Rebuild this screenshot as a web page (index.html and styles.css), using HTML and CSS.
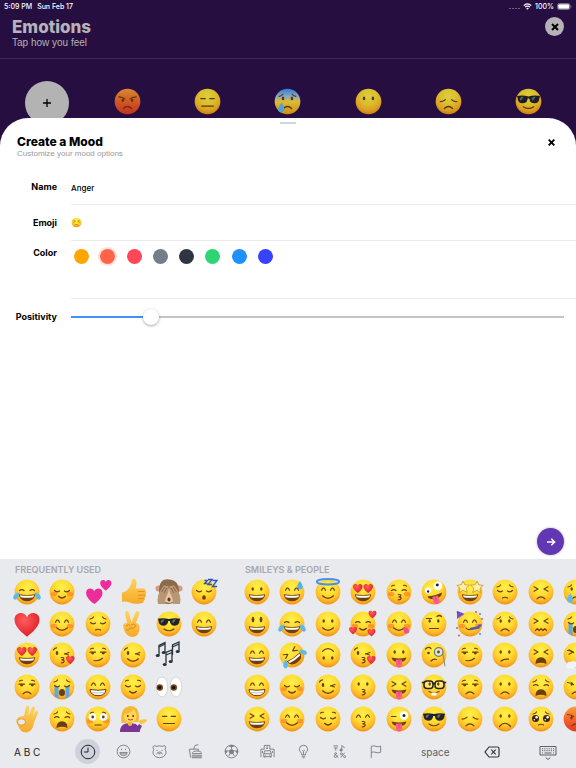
FILE: index.html
```
<!DOCTYPE html>
<html lang="en">
<head>
  <meta charset="UTF-8" />
  <meta name="viewport" content="width=device-width, initial-scale=1.0"/>
  <title>Emotions</title>
  <link rel="stylesheet" href="styles.css">
</head>
<body>

<!-- Gradients shared by all emoji -->
<svg class="defs" width="0" height="0" aria-hidden="true">
  <defs>
    <radialGradient id="g-yellow" cx="50%" cy="30%" r="72%">
      <stop offset="0" stop-color="#fff04a"/>
      <stop offset=".45" stop-color="#ffdc33"/>
      <stop offset=".75" stop-color="#ffba27"/>
      <stop offset="1" stop-color="#ee8c12"/>
    </radialGradient>
    <linearGradient id="g-red" x1="0" y1="0" x2="0" y2="1">
      <stop offset="0" stop-color="#fba03a"/>
      <stop offset=".5" stop-color="#f5652c"/>
      <stop offset="1" stop-color="#e23a22"/>
    </linearGradient>
    <linearGradient id="g-cold" x1="0" y1="0" x2="0" y2="1">
      <stop offset="0" stop-color="#3f8cf0"/>
      <stop offset=".3" stop-color="#9cc3e8"/>
      <stop offset=".5" stop-color="#fedb3b"/>
      <stop offset="1" stop-color="#f3a01c"/>
    </linearGradient>
    <radialGradient id="g-heart" cx="40%" cy="30%" r="75%">
      <stop offset="0" stop-color="#ff5d5d"/>
      <stop offset="1" stop-color="#dc1a22"/>
    </radialGradient>
    <linearGradient id="g-hand" x1="0" y1="0" x2="0" y2="1">
      <stop offset="0" stop-color="#ffd45a"/>
      <stop offset="1" stop-color="#f5a92b"/>
    </linearGradient>
  </defs>
</svg>

<div class="app">

  <div class="backdrop">
    <div class="status-bar">
      <span>5:09 PM</span>
      <span>Sun Feb 17</span>
      <span class="status-right">
        <span class="signal"><i></i><i></i><i></i><i></i></span>
        <svg width="9" height="7" viewBox="0 0 18 14"><path d="M1.5 5.2Q9-1.8 16.5 5.2M4.3 8.2q4.700-4.200 9.400 0" fill="none" stroke="#fff" stroke-width="2.400"/><path d="M9 13.500l-2.700-3q2.700-2 5.400 0z" fill="#fff"/></svg>
        <span>100%</span>
        <svg width="15" height="7" viewBox="0 0 30 14"><rect x="1" y="1" width="25" height="12" rx="3.500" fill="none" stroke="#9b90a8" stroke-width="1.500"/><rect x="2.500" y="2.500" width="22" height="9" rx="2" fill="#fff"/><path d="M27.500 5v4q1.500-.5 1.500-2t-1.500-2z" fill="#9b90a8"/></svg>
      </span>
    </div>

    <header>
      <div>
        <h1>Emotions</h1>
        <p>Tap how you feel</p>
      </div>
      <button class="close-round" aria-label="Close">
        <svg width="8" height="8" viewBox="0 0 8 8"><path d="M1 1l6 6M7 1l-6 6" stroke="#000" stroke-width="2"/></svg>
      </button>
    </header>

    <div class="moods">
      <button class="add-mood" aria-label="Add mood">
        <svg width="8" height="8" viewBox="0 0 8 8"><path d="M4 0v8M0 4h8" stroke="#000" stroke-width="1.300"/></svg>
      </button>
      <button class="mood" data-emoji="rage"></button>
      <button class="mood" data-emoji="expressionless"></button>
      <button class="mood" data-emoji="coldSweat"></button>
      <button class="mood" data-emoji="noMouth"></button>
      <button class="mood" data-emoji="disappointed"></button>
      <button class="mood" data-emoji="sunglasses"></button>
    </div>
  </div>

  <main class="sheet">
    <div class="grabber"></div>
    <div class="sheet-head">
      <div>
        <h2>Create a Mood</h2>
        <p>Customize your mood options</p>
      </div>
      <button class="close" aria-label="Close">
        <svg width="7" height="7" viewBox="0 0 7 7"><path d="M.7.7l5.600 5.600M6.300.7L.7 6.300" stroke="#000" stroke-width="1.900"/></svg>
      </button>
    </div>

    <form class="mood-form">
      <div class="row">
        <label for="name">Name</label>
        <div class="field"><input type="text" id="name" value="Anger" /></div>
      </div>
      <div class="row">
        <label for="emoji">Emoji</label>
        <div class="field"><button type="button" id="emoji" class="emoji-field" data-emoji="persevere"></button></div>
      </div>
      <div class="row row-color">
        <label for="orange">Color</label>
        <div class="field">
          <div class="colors">
            <input type="radio" name="color" id="orange" class="orange" aria-label="Orange" />
            <input type="radio" name="color" class="tomato" aria-label="Tomato" checked />
            <input type="radio" name="color" class="red" aria-label="Red" />
            <input type="radio" name="color" class="grey" aria-label="Grey" />
            <input type="radio" name="color" class="dark" aria-label="Dark" />
            <input type="radio" name="color" class="green" aria-label="Green" />
            <input type="radio" name="color" class="blue" aria-label="Blue" />
            <input type="radio" name="color" class="indigo" aria-label="Indigo" />
          </div>
        </div>
      </div>
      <div class="row">
        <label for="positivity">Positivity</label>
        <div class="field field-slider"><input type="range" id="positivity" min="0" max="100" value="15" /></div>
      </div>
    </form>

    <button class="next" aria-label="Next">
      <svg width="10" height="10" viewBox="0 0 10 10"><path d="M1 5h7.500M5.300 1.700L8.600 5 5.300 8.300" fill="none" stroke="#fff" stroke-width="1.500"/></svg>
    </button>
  </main>

  <section class="keyboard">
    <div class="groups">
      <div class="group group-recent">
        <h3>FREQUENTLY USED</h3>
        <div class="emoji-grid" id="recent"></div>
      </div>
      <div class="group group-people">
        <h3>SMILEYS &amp; PEOPLE</h3>
        <div class="emoji-grid" id="people"></div>
      </div>
    </div>

    <div class="toolbar">
      <button class="abc">A B C</button>
      <div class="tabs">
        <button class="active" aria-label="Recent"><svg viewBox="0 0 16 16"><circle cx="8" cy="8" r="6.800"/><path d="M8 3.500V8H4"/></svg></button>
        <button aria-label="Smileys"><svg viewBox="0 0 16 16"><circle cx="8" cy="8" r="6.800"/><path d="M4 9h8q-.4 3.500-4 3.500T4 9zM4.800 10.500h6.400"/><path d="M5.900 5v1.500M10.100 5v1.500"/></svg></button>
        <button aria-label="Animals"><svg viewBox="0 0 16 16"><path d="M4.500 2.600Q3 .8 1.500 2.300T2 5.600Q.6 8.500 1.200 10.500 3 14.700 8 14.700t6.800-4.200Q15.400 8.500 14 5.600q1.200-2.200 0-3.500t-2.500.5Q8 1.200 4.500 2.600z"/><path d="M5 11q.3-2.500 3-2.500t3 2.500M5.300 6.300v1.200M10.700 6.300v1.200M7.200 10h1.600L8 11z"/></svg></button>
        <button aria-label="Food"><svg viewBox="0 0 16 16"><path d="M2.800 14.500L1.500 5.500h10M6 5.500L7.500 1.500l3.500-.8M11 5.500l-.2 2"/><path d="M4.500 10.200q.2-2.700 5-2.700t5 2.700zM4 12h11M4.500 13.700h10v1h-10z"/></svg></button>
        <button aria-label="Activity"><svg viewBox="0 0 16 16"><circle cx="8" cy="8" r="6.800"/><path class="solid" d="M8 5.500l2.500 1.800-.9 3H6.400l-.9-3zM5.500 2L8 3.200 10.500 2 8 1.400zM1.500 6.500l1.500 1-.5 2-1-1zM14.500 6.500l-1.500 1 .5 2 1-1z"/><path d="M8 3v2M3 7.500l2-.3M13 7.500l-2-.3M6.100 10.700L5 12.800M9.900 10.700L11 12.800"/></svg></button>
        <button aria-label="Travel"><svg viewBox="0 0 16 16"><path d="M1 14V5.500h3.500V1.500h6v4H15V14M6.500 3.300h2M6.500 4.800h2M2.700 7.500v2M13.300 7.500v2"/><path d="M4 10.300L5 7.200h6l1 3.100v3.200H4zM4 10.300h8M4.500 13.500v1.200M11.500 13.500v1.200M5.500 12h1M9.500 12h1"/></svg></button>
        <button aria-label="Objects"><svg viewBox="0 0 16 16"><path d="M6 11.500Q6 9.700 4.500 8 3.300 6.500 3.600 5 4.300 1.300 8 1.300T12.400 5q.3 1.500-.9 3Q10 9.700 10 11.500zM6 13h4M6.800 14.700h2.400M8 11V8L6.700 6.500M8 8l1.300-1.500"/></svg></button>
        <button aria-label="Symbols"><svg viewBox="0 0 16 16"><path d="M1.500 2h5M2 4.200h4M4 4.200v3M10.500 6.500V1.500q1 1.500 3 2.500"/><circle class="solid" cx="9.700" cy="6.500" r="1.200"/><path d="M6.500 14.500L3 10.800q-.5-1.500 1-1.500 1.400.2.700 1.500l-2.200 1.400q-.8 2 1 2.200 1.800 0 2.800-2.400M13.500 9.300L9.500 14.500"/><circle cx="10" cy="10.500" r="1.100"/><circle cx="13.500" cy="13.500" r="1.100"/></svg></button>
        <button aria-label="Flags"><svg viewBox="0 0 16 16"><path d="M3.500 15V2.500q3-1.200 5 0t5-.3v6.600q-3 1.300-5 .2t-5 0"/></svg></button>
      </div>
      <button class="space">space</button>
      <button class="key" aria-label="Delete"><svg width="16" height="12" viewBox="0 0 16 12"><path d="M5 1h8.500q1.500 0 1.500 1.500v7q0 1.500-1.500 1.500H5L1 6zM7.300 3.700l4.400 4.600M11.700 3.700L7.300 8.300"/></svg></button>
      <button class="key hide-key" aria-label="Hide keyboard"><svg width="18" height="16" viewBox="0 0 18 16"><path d="M1 1.500h16v8.500H1z"/><path stroke-dasharray="1.200 1" d="M3 3.800h12.500M3 5.700h12.500"/><path d="M3 8h1M5.500 8h7M14 8h1M6.700 12.500L9 14.500l2.300-2"/></svg></button>
    </div>
  </section>

</div>

<script src="emoji.js"></script>
</body>
</html>
```
FILE: styles.css
```
* {
  box-sizing: border-box;
}

body {
  margin: 0;
  font-family: Inter, "Liberation Sans", sans-serif;
  background-color: #260f40;
}

h1, h2, h3, p {
  margin: 0;
}

button {
  border: none;
  padding: 0;
  background: none;
  font-family: inherit;
  cursor: pointer;
}

svg {
  display: block;
}

.defs {
  position: absolute;
}

.app {
  display: flex;
  flex-direction: column;
  min-height: 100vh;
  overflow: hidden;
}

/* Dimmed screen behind the sheet */
.backdrop {
  background-color: #260f40;
}

.status-bar {
  display: flex;
  align-items: center;
  gap: 5px;
  height: 12px;
  padding: 0 4px;
  color: #fff;
  font-size: 7px;
  font-weight: 500;
}

.status-right {
  display: flex;
  align-items: center;
  gap: 3px;
  margin-left: auto;
}

.signal {
  display: flex;
  gap: 1px;
  padding-top: 4px;
}

.signal i {
  width: 2px;
  height: 1px;
  background-color: #6f6080;
}

header {
  display: flex;
  justify-content: space-between;
  align-items: flex-start;
  height: 47px;
  padding: 5px 12px 0;
  border-bottom: 1px solid #3b2553;
  color: #b5b2b8;
}

h1 {
  font-size: 17px;
  line-height: 20px;
  font-weight: 800;
}

header p {
  font-family: "Liberation Sans", Arial, sans-serif;
  font-size: 10px;
  line-height: 11px;
}

.close-round {
  display: flex;
  justify-content: center;
  align-items: center;
  width: 19px;
  height: 19px;
  border-radius: 50%;
  background-color: #b5b3b7;
}

.moods {
  display: grid;
  grid-template-columns: repeat(7, 1fr);
  justify-items: center;
  padding: 22px 7px 0;
}

.add-mood {
  display: flex;
  justify-content: center;
  align-items: center;
  width: 44px;
  height: 44px;
  border-radius: 50%;
  background-color: #b3b3b3;
}

.mood {
  padding-bottom: 4px;
  filter: brightness(0.86);
}

.mood svg {
  width: 29px;
  height: 29px;
}

/* Sheet */
.sheet {
  position: relative;
  display: flex;
  flex-direction: column;
  flex: 1;
  margin-top: -7px;
  border-radius: 28px 28px 0 0;
  background-color: #fff;
}

.grabber {
  width: 16px;
  height: 2px;
  margin: 4px auto 0;
  background-color: #d4d4d4;
}

.sheet-head {
  display: flex;
  justify-content: space-between;
  align-items: flex-start;
  height: 45px;
  padding: 11px 17px 0;
}

h2 {
  font-size: 12px;
  line-height: 14px;
  font-weight: 800;
}

.sheet-head p {
  font-family: "Liberation Sans", Arial, sans-serif;
  font-size: 8px;
  line-height: 9px;
  color: #9a9a9a;
}

.close {
  padding: 4px;
}

.row {
  display: flex;
  align-items: stretch;
  height: 36px;
}

.row label {
  width: 57px;
  padding-top: 12px;
  font-size: 9px;
  line-height: 12px;
  font-weight: 700;
  text-align: right;
}

.field {
  display: flex;
  align-items: center;
  flex: 1;
  margin-left: 14px;
  border-bottom: 1px solid #ebebeb;
}

.field input[type="text"] {
  width: 100%;
  padding: 2px 0 0;
  border: none;
  outline: none;
  font-family: inherit;
  font-size: 8px;
  font-weight: 500;
}

.emoji-field svg {
  width: 11px;
  height: 11px;
}

.row-color {
  height: 58px;
}

.row-color label {
  padding-top: 6px;
}

.row-color .field {
  align-items: flex-start;
}

.colors {
  display: flex;
  justify-content: space-between;
  width: 202px;
  padding: 8px 0 0 3px;
}

.colors input {
  appearance: none;
  width: 15px;
  height: 15px;
  margin: 0;
  border-radius: 50%;
}

.colors input:checked {
  box-shadow: 0 0 0 2px #ffe0da;
}

.orange { background-color: #ffa502; }
.tomato { background-color: #ff6348; }
.red { background-color: #ff4757; }
.grey { background-color: #747d8c; }
.dark { background-color: #2f3542; }
.green { background-color: #2ed573; }
.blue { background-color: #1e90ff; }
.indigo { background-color: #3742fa; }

.field-slider {
  margin-right: 12px;
  border: none;
}

.field-slider input {
  appearance: none;
  width: 100%;
  height: 16px;
  margin: 0;
  background: none;
}

.field-slider input::-webkit-slider-runnable-track {
  height: 2px;
  background: linear-gradient(to right, #3d94f6 16%, #c4c4c4 16%);
}

.field-slider input::-webkit-slider-thumb {
  appearance: none;
  width: 16px;
  height: 16px;
  margin-top: -7px;
  border-radius: 50%;
  background-color: #fff;
  box-shadow: 0 1px 3px rgba(0,0,0,0.35);
}

.next {
  display: flex;
  justify-content: center;
  align-items: center;
  width: 27px;
  height: 27px;
  margin: auto 12px 4px auto;
  border-radius: 50%;
  background-color: #6237b3;
  box-shadow: 0 0 3px rgba(0,0,0,0.3);
}

/* Emoji keyboard */
.keyboard {
  background-color: #e9eaee;
}

.groups {
  display: flex;
  gap: 17px;
  padding: 4px 0 0 9px;
  overflow: hidden;
}

.group {
  flex: none;
}

.group-recent {
  width: 213px;
}

.group-people {
  width: 355px;
}

h3 {
  padding-left: 6px;
  font-size: 9px;
  line-height: 13px;
  font-weight: 600;
  color: #a6a8ad;
}

.emoji-grid {
  display: grid;
  grid-auto-flow: column;
  grid-template-rows: repeat(5, 1fr);
  height: 159px;
}

.group-recent .emoji-grid {
  grid-template-columns: repeat(6, 1fr);
}

.group-people .emoji-grid {
  grid-template-columns: repeat(10, 1fr);
}

.emoji-grid button {
  display: flex;
  justify-content: center;
  align-items: center;
}

.emoji-grid svg {
  width: 28px;
  height: 28px;
  overflow: visible;
}

.ink-line {
  fill: none;
  stroke: #6b3f10;
  stroke-width: 1.2;
  stroke-linecap: round;
  stroke-linejoin: round;
}

.ink {
  fill: #6b3f10;
}

.toolbar {
  display: flex;
  align-items: center;
  height: 33px;
  padding: 0 19px 0 14px;
  color: #33363b;
}

.abc {
  width: 61px;
  color: #222;
  font-size: 10px;
  text-align: left;
}

.tabs {
  display: flex;
  gap: 11px;
}

.tabs button {
  display: flex;
  justify-content: center;
  align-items: center;
  width: 25px;
  height: 25px;
  border-radius: 50%;
}

.tabs .active {
  background-color: #cfd2dc;
}

.tabs svg {
  width: 15px;
  height: 15px;
  fill: none;
  stroke: #7b7e85;
  stroke-width: 1;
}

.tabs .active svg {
  width: 16px;
  height: 16px;
  stroke: #222;
}

.tabs .solid {
  fill: #7b7e85;
}

.space {
  margin-left: 33px;
  color: #5c5f66;
  font-size: 10px;
}

.key {
  margin-left: 34px;
}

.key svg {
  fill: none;
  stroke: #33363b;
  stroke-width: 1.2;
}

.hide-key {
  margin-left: auto;
  padding-top: 3px;
}

.hide-key svg {
  stroke: #5c5f66;
  stroke-width: 1;
}
```
FILE: emoji.js
```
const line = d => `<path class="ink-line" d="${d}"/>`;
const ink = d => `<path class="ink" d="${d}"/>`;
const fill = (d, color) => `<path d="${d}" fill="${color}"/>`;
const heart = (x, y, s, color = "url(#g-heart)") =>
  `<path transform="translate(${x} ${y}) scale(${s})" d="M0 10C-4 7-10 2-10-3.500-10-10-2-10.500 0-5.500 2-10.500 10-10 10-3.500 10 2 4 7 0 10z" fill="${color}"/>`;

const base = {
  yellow: '<circle cx="14" cy="14" r="12.4" fill="url(#g-yellow)"/>',
  red: '<circle cx="14" cy="14" r="12.4" fill="url(#g-red)"/>',
  cold: '<circle cx="14" cy="14" r="12.4" fill="url(#g-cold)"/>'
};

const parts = {
  // eyes
  dots: '<ellipse class="ink" cx="9.700" cy="11" rx="1.200" ry="1.800"/><ellipse class="ink" cx="18.300" cy="11" rx="1.200" ry="1.800"/>',
  tall: '<ellipse class="ink" cx="10" cy="9.500" rx="1.400" ry="2.700"/><ellipse class="ink" cx="18" cy="9.500" rx="1.400" ry="2.700"/>',
  happy: line("M7.500 12.300q2-5 4 0M16.500 12.300q2-5 4 0"),
  closed: line("M6.500 12.500q2.300 2.300 5 .5M16.500 13q2.700 1.800 5-.5"),
  lidded: line("M6.500 12.500q2.300-1.800 4.500 0M17 12.500q2.300-1.800 4.500 0"),
  squint: line("M7 8.800l4 2.200-4 2.200M21 8.800l-4 2.200 4 2.200"),
  bars: line("M7.500 11.300h4.300M16.200 11.300h4.300"),
  wink: '<ellipse class="ink" cx="9" cy="12" rx="1.300" ry="2"/>' + line("M16.500 13l4.500-1.500M16.800 12.700l3.700 1.300M5.500 9q1-2 3-2.200"),
  side: line("M6 11.200h5.500M16.500 11.200H22") + ink("M7 11.300h3.500q-.3 2.200-1.800 2.200T7 11.300zM17.500 11.300H21q-.3 2.200-1.800 2.200t-1.700-2.200z"),
  lovely: heart(8.8, 10.3, .48) + heart(19.2, 10.3, .48),
  wide: '<circle cx="8.500" cy="12" r="3.800" fill="#fff"/><circle cx="19.500" cy="12" r="3.800" fill="#fff"/><circle class="ink" cx="8.700" cy="12" r="1.400"/><circle class="ink" cx="19.300" cy="12" r="1.400"/>',
  // brows
  sadBrows: line("M6 9q2.500-.3 3.500-2M22 9q-2.500-.3-3.500-2"),
  madBrows: line("M5.500 9.500q4 .2 6 2M22.500 9.500q-4 .2-6 2"),
  upBrows: line("M6.500 8.200q1.200-1.200 2.800-.9M18.700 7.300q1.600-.3 2.800.9"),
  // mouths
  open: ink("M5.800 16.300q8.200 1.500 16.400 0Q21.500 23.200 14 23.200T5.800 16.300z") + fill("M7 17.200q7 1.200 14 0l-.6 2q-6.400 1.200-12.800 0z", "#fff"),
  teeth: '<path d="M6 16.500q8 1.500 16 0-.6 6.200-8 6.200t-8-6.200z" fill="#fff" stroke="#6b3f10"/><path d="M7.500 19.500q6.500 1 13 0" stroke="#a9a098" stroke-width=".7" fill="none"/>',
  smile: line("M8.500 17.800q5.500 5 11 0"),
  little: line("M10.500 18.300q3.500 3.400 7 0"),
  frown: line("M10 20.800q4-4 8 0"),
  bigFrown: line("M8.500 21.500q5.500-6.500 11 0"),
  small: line("M11.500 20q2.500-1.500 5 0"),
  flat: line("M8.500 18.500h11"),
  smirk: line("M10 19.500q5 1 8.500-2.200"),
  kiss: line("M13.300 16.500q3-.2 2.500 1.300-.4 1-2 1 2.500 0 2.300 1.500-.3 1.600-2.800 1.500"),
  tongue: ink("M6.500 16.500q7.500 1.800 15 0Q20.500 21 14 21t-7.500-4.500z") + fill("M11 18.500h6v5q0 3-3 3t-3-3z", "#fb5c8e") + fill("M13.700 19h.6v4h-.6z", "#d83a6c"),
  wail: ink("M8.500 23Q8.500 16.300 14 16.300T19.500 23Q14 20.300 8.500 23z"),
  wavy: line("M8.500 20.500l1.800-1.800 1.900 1.800 1.800-1.800 1.800 1.800 1.900-1.800 1.800 1.800"),
  // extras
  blush: '<ellipse cx="6" cy="16" rx="3.200" ry="2.300" fill="#f77a22" opacity=".6"/><ellipse cx="22" cy="16" rx="3.200" ry="2.300" fill="#f77a22" opacity=".6"/>',
  joyTears: fill("M6.500 14.500q-4 .3-6 3.500-1 3 1.500 3.700 3-.2 4.500-7.200z", "#59b9ef") + fill("M21.500 14.500q4 .3 6 3.500 1 3-1.500 3.700-3-.2-4.500-7.200z", "#59b9ef"),
  streams: fill("M6.500 13h4v12.500l-4-2zM17.500 13h4v10.500l-4 2z", "#59a9ec"),
  tear: fill("M8.500 15q-4 5-3.500 7.500.5 2.200 3 2.200t3-2.400Q11 19.500 8.500 15z", "#5cbcf3"),
  sweat: fill("M22 3q-3.500 4.500-2.700 6.800.8 1.800 3 1.600 2.600-.4 2.400-2.800T22 3z", "#4db4f2"),
  halo: '<ellipse cx="14" cy="3.800" rx="11.200" ry="2.700" fill="none" stroke="#4a8fea" stroke-width="2"/>',
  shades: '<path d="M2.800 8.700q5.700-1.200 11.200.4 5.500-1.600 11.200-.4l-.6 1.600q-.4 5.400-4.800 5.400-4.500 0-5-4.700h-1.600q-.5 4.700-5 4.700-4.400 0-4.800-5.400z" fill="#222326"/><path d="M5.500 11l2-1.500h2l-3 4zM17 11l2-1.500h2l-3 4z" fill="#6d7075"/>',
  kissHeart: heart(22.3, 18.8, .43),
  hearts: heart(23.5, 4.3, .4) + heart(4, 20.5, .4) + heart(22.5, 22.5, .4),
  zzz: '<path d="M14.500 2.500h3l-3 3h3M18 1.500h4l-4 5h4M22.500 2.500h4.500l-4.500 6h4.500" fill="none" stroke="#2c51c4" stroke-width="1.300"/>',
  lick: fill("M18 18.500q3-2.500 5 0t1 4-4.500.7z", "#f24f8c"),
  glasses: '<g fill="#fff" fill-opacity=".3" stroke="#25211f" stroke-width="1.500"><rect x="4" y="8" width="9" height="7.500" rx="3"/><rect x="15" y="8" width="9" height="7.500" rx="3"/></g><path d="M1.800 9.500h2.500M26.200 9.500h-2.500M12.700 10.500h2.600" stroke="#25211f" stroke-width="1.500" fill="none"/>',
  buck: line("M9 18.500q5 2.500 10 0") + fill("M11.500 19.500h5v3h-5z", "#fff"),
  monocle: '<path d="M22.500 11.500q1.500 6 2.500 14" stroke="#86867f" stroke-width="1" fill="none"/><circle cx="18.700" cy="11" r="4.300" fill="#dce5df" stroke="#77776d" stroke-width="1.300"/><circle class="ink" cx="18.500" cy="11" r="1.400"/><circle class="ink" cx="8.500" cy="12" r="1.300"/>' + line("M5.500 8q3-3 5.500-.5M11 20q2.500-2.500 5.500-1.500"),
  stars: '<g fill="#fff2a8" stroke="#c98a22" stroke-width=".7"><path d="M7 3l1.800 3.800 4.700.3-3.500 3.100 1.300 4.300-4.300-2.400-3.800 2.700.8-4.600L.8 7.400l4.500-.6z"/><path d="M21 3l1.700 3.800 4.500.6-3.200 2.800.8 4.600-3.800-2.700-4.300 2.400L18 10.200l-3.500-3.100 4.700-.3z"/></g>',
  plead: '<circle cx="8.500" cy="13.500" r="3.500" fill="#3b241a"/><circle cx="19.500" cy="13.500" r="3.500" fill="#3b241a"/><g fill="#fff"><circle cx="9.600" cy="12.200" r="1.300"/><circle cx="7.300" cy="14.800" r=".8"/><circle cx="20.600" cy="12.200" r="1.300"/><circle cx="18.300" cy="14.800" r=".8"/></g>',
  party: fill("M1.200 9L.8.800 8.500 4z", "#6246b8") + '<path d="M1.500 5l4-2.500M1.500 8L8 4" stroke="#a36bdc"/><path d="M14.500 19l8-1.500q0-2.500 3-2" stroke="#5656ba" stroke-width="2.300" fill="none"/><g fill="#e5455e"><circle cx="20" cy="2" r=".9"/><circle cx="3" cy="25.500" r=".9"/><circle cx="26" cy="9" r=".9"/></g><g fill="#3f7fe0"><circle cx="24" cy="4" r=".9"/><circle cx="1" cy="18" r=".9"/><circle cx="24" cy="24" r=".9"/></g>',
  puff: fill("M14 21q-3-2-5 0-4-1-4 2-3 2 1 4.500 6 1 7-1 3-2 1-5.500z", "#eef4fa")
};

const turned = (deg, s) => `<g transform="rotate(${deg} 14 14)">${s}</g>`;
const face = (names, color = "yellow") => base[color] + names.split(" ").map(n => parts[n]).join("");

const emoji = {
  joy: face("lidded open joyTears"),
  relaxed: face("blush closed little"),
  sleeping: face("closed zzz") + '<ellipse class="ink" cx="14" cy="19.500" rx="1.800" ry="2.200"/>',
  blush: face("blush happy smile"),
  pensive: face("sadBrows closed small"),
  sunglasses: face("shades") + line("M9 19q5 3.500 10 0"),
  smile: face("happy open"),
  heartEyes: face("lovely open"),
  kissHeart: face("wink kiss kissHeart"),
  smirk: face("side upBrows smirk"),
  wink: face("wink smile"),
  unamused: face("side upBrows frown"),
  sob: face("streams closed sadBrows") + '<ellipse class="ink" cx="14" cy="19.500" rx="3" ry="3.500"/>',
  grin: face("happy teeth"),
  relieved: face("closed upBrows little"),
  weary: face("lidded sadBrows wail"),
  flushed: face("blush wide upBrows") + line("M11 20h6"),
  expressionless: face("bars flat"),
  grinning: face("dots open"),
  smiley: face("tall open"),
  laughing: face("squint open"),
  sweatSmile: face("happy open sweat"),
  rofl: turned(-35, face("squint open joyTears")),
  innocent: face("happy smile halo"),
  slightSmile: face("dots smile"),
  upsideDown: base.yellow + turned(180, parts.dots + parts.smile),
  smilingHearts: face("blush lidded little hearts"),
  kissing: face("dots kiss"),
  kissingSmile: face("happy kiss"),
  kissingClosed: face("blush lidded upBrows kiss"),
  yum: face("blush happy smile lick"),
  tongueDots: face("dots tongue"),
  tongueSquint: face("squint tongue"),
  tongueWink: face("tongue") + line("M6.500 11.500h4.500") + '<circle cx="19" cy="10.500" r="4.200" fill="#fff"/><circle cx="19" cy="10.500" r="1.500" fill="#222"/>',
  zany: turned(-15, face("tongue") + '<circle cx="19.500" cy="9" r="4.400" fill="#fff"/><circle cx="8.500" cy="11" r="3.200" fill="#fff"/><circle cx="19" cy="8" r="1.500" fill="#222"/><circle cx="8.500" cy="12" r="1.200" fill="#222"/>'),
  raisedBrow: face("dots") + line("M6.500 8.500h5M17 6.500q2-2 4.500 0M9.500 18.500h9"),
  monocle: face("monocle"),
  nerd: face("glasses dots buck"),
  starStruck: face("open stars"),
  party: face("blush happy party") + line("M10 18q2 2.500 4.500 1"),
  disappointed: face("frown") + line("M6 14q3 .3 5-1.800M22 14q-3 .3-5-1.800"),
  worried: face("dots sadBrows frown"),
  confused: face("dots") + line("M10 20q3-2.500 7.500-1.800"),
  slightFrown: face("dots frown"),
  frowning: face("dots bigFrown"),
  persevere: face("squint frown"),
  confounded: face("squint wavy"),
  tired: face("squint wail"),
  pleading: face("sadBrows plead small"),
  cry: face("dots sadBrows frown tear"),
  huff: face("squint madBrows puff"),
  angry: face("dots madBrows frown"),
  rage: face("madBrows frown", "red") + '<ellipse class="ink" cx="9.500" cy="12.800" rx="1.200" ry="1.700"/><ellipse class="ink" cx="18.500" cy="12.800" rx="1.200" ry="1.700"/>',
  coldSweat: face("dots sadBrows frown tear", "cold"),
  noMouth: face("dots"),

  heart: heart(14, 14.2, 1.25),
  twoHearts: heart(10.3, 17.8, .82, "#ee2b9b") + heart(21.8, 7, .56, "#ee2b9b"),
  thumbsUp: '<path d="M3 14.500q4-.5 7-4.500 3-3.500 2.800-7.500 0-2.300 2-2 2.700.7 2.700 4.500 0 3-1 5.500h8q2.500.3 2 2.300 1.700 1.700.2 3.600 1 2-.8 3.300.5 2-1.200 3 .2 2-2.200 2.500-7 1.300-12-.7-3-1.400-7.500-.7z" fill="url(#g-hand)"/><path d="M19 13.500h6.500M19 17.200h7M19 20.500h5.800" stroke="#d98a1c" stroke-width=".8" fill="none"/>',
  victory: '<path d="M8 13L6 3q.2-2.300 2.200-2 1.300.2 1.600 1.500l2.700 9.700 4-9.700q.8-1.700 2.500-1.200 1.800.7 1.200 2.500L17 13q4 1 3.500 6-.8 7.500-6.500 8-5.500 0-8.500-6L4 15.700q0-2.400 4-2.700z" fill="url(#g-hand)"/><path d="M7 16q3-3 4.500 0M12 15q4-2.500 4.500 1.500-1.500 2.500-5.500 1.500-1 3-4 2" fill="none" stroke="#d98a1c"/>',
  okHand: '<path d="M11 11L13 2q.7-1.700 2-1.200t1 2L15.500 11 19 2.500q.8-1.300 2-.8t.8 2L19.500 12l2.800-5.500q1-1.200 2-.5t.4 2.200L21 18q-1.500 9-8 9.500-6-.3-8-7Q1.500 15.500 5 12.500q3-2 6-1.500z" fill="url(#g-hand)"/><ellipse cx="8.500" cy="17" rx="4" ry="3.200" fill="#e9eaee" stroke="#d98a1c" stroke-width=".8"/>',
  monkey: '<circle cx="3.500" cy="10.500" r="3" fill="#d79a83"/><circle cx="24.500" cy="10.500" r="3" fill="#d79a83"/><path d="M14 1.500q10 .5 10 12T14 26 4 13.500 14 1.500z" fill="#8b6b4c"/><path d="M7 14q7-7 14 0v8q-7 6-14 0z" fill="#e5c7a6"/><path d="M3 26Q1 17 8 8.500q1.500-2 3-.5l2.300-.3q1.200 3-.3 7.500-3 4-3 10.800zM25 26q2-9-5-17.500-1.500-2-3-.5l-2.300-.3q-1.200 3 .3 7.500 3 4 3 10.800z" fill="#b99774"/><path d="M6.500 14L10 9M9 15l3-5M21.500 14L18 9M19 15l-3-5" stroke="#705238" stroke-width=".7"/><ellipse cx="14" cy="21.500" rx="1.500" ry="2" fill="#6c3427"/>',
  notes: '<path d="M4 14V4.500l6-3V11M4 6l6-3M17.500 14V4l6.500-3v9M17.500 6L24 3M11 22.500v-11l6-2.500v11M11 14l6-2.500" stroke="#28323d" stroke-width="1.300" fill="none"/><g fill="#28323d"><ellipse cx="2.700" cy="14.500" rx="2" ry="1.500"/><ellipse cx="8.700" cy="11.500" rx="2" ry="1.500"/><ellipse cx="22.700" cy="10.500" rx="2" ry="1.500"/><ellipse cx="9.700" cy="23.500" rx="2" ry="1.500"/><ellipse cx="15.700" cy="20.500" rx="2" ry="1.500"/></g>',
  eyes: '<g fill="#fff" stroke="#cfd0d3" stroke-width=".8"><ellipse cx="7" cy="14" rx="5.700" ry="10"/><ellipse cx="21" cy="14" rx="5.700" ry="10"/></g><g fill="#7b4417"><circle cx="4.800" cy="14.500" r="3.200"/><circle cx="18.800" cy="14.500" r="3.200"/></g><g fill="#1b1411"><circle cx="4.600" cy="14.500" r="1.800"/><circle cx="18.600" cy="14.500" r="1.800"/></g>',
  tipping: '<path d="M2.500 18Q1 4 8 2q6-3 10 2 3 4 1.500 13z" fill="#f4b934"/><path d="M1 27q0-7.500 6-8.500h7q6 0 7 8.500z" fill="#7a3595"/><path d="M15 27l5-8 3 2-3 6z" fill="#7a3595"/><path d="M19 16.500q4-3 8.500-2l.5 1.500-6 3.500z" fill="#fbc23d"/><path d="M6 9q7-1 8.500-5 3 3 3 7-.5 7-6.500 7.500Q5.500 18 5 11z" fill="#ffd657"/><path d="M9 17h4v3q-2 2-4 0z" fill="#f5b733"/><circle cx="8.800" cy="11" r=".9" fill="#4d2c10"/><circle cx="14.200" cy="11" r=".9" fill="#4d2c10"/><path d="M9 14.200q2.500 1.800 5 0" stroke="#b83b35" fill="none"/>'
};

const recent = [
  "joy", "heart", "heartEyes", "unamused", "okHand",
  "relaxed", "blush", "kissHeart", "sob", "weary",
  "twoHearts", "pensive", "smirk", "grin", "flushed",
  "thumbsUp", "victory", "wink", "relieved", "tipping",
  "monkey", "sunglasses", "notes", "eyes", "expressionless",
  "sleeping", "smile"
];

const people = [
  "grinning", "smiley", "smile", "grin", "laughing",
  "sweatSmile", "joy", "rofl", "relaxed", "blush",
  "innocent", "slightSmile", "upsideDown", "wink", "relieved",
  "heartEyes", "smilingHearts", "kissHeart", "kissing", "kissingSmile",
  "kissingClosed", "yum", "tongueDots", "tongueSquint", "tongueWink",
  "zany", "raisedBrow", "monocle", "nerd", "sunglasses",
  "starStruck", "party", "smirk", "unamused", "disappointed",
  "pensive", "worried", "confused", "slightFrown", "frowning",
  "persevere", "confounded", "tired", "weary", "pleading",
  "cry", "sob", "huff", "angry", "rage"
];

function draw(name) {
  return `<svg viewBox="0 0 28 28" aria-hidden="true">${emoji[name]}</svg>`;
}

function fillGrid(id, names) {
  document.getElementById(id).innerHTML = names.map(n => `<button aria-label="${n}">${draw(n)}</button>`).join("");
}

fillGrid("recent", recent);
fillGrid("people", people);

document.querySelectorAll("[data-emoji]").forEach(el => {
  el.innerHTML = draw(el.dataset.emoji);
  el.setAttribute("aria-label", el.dataset.emoji);
});
```
